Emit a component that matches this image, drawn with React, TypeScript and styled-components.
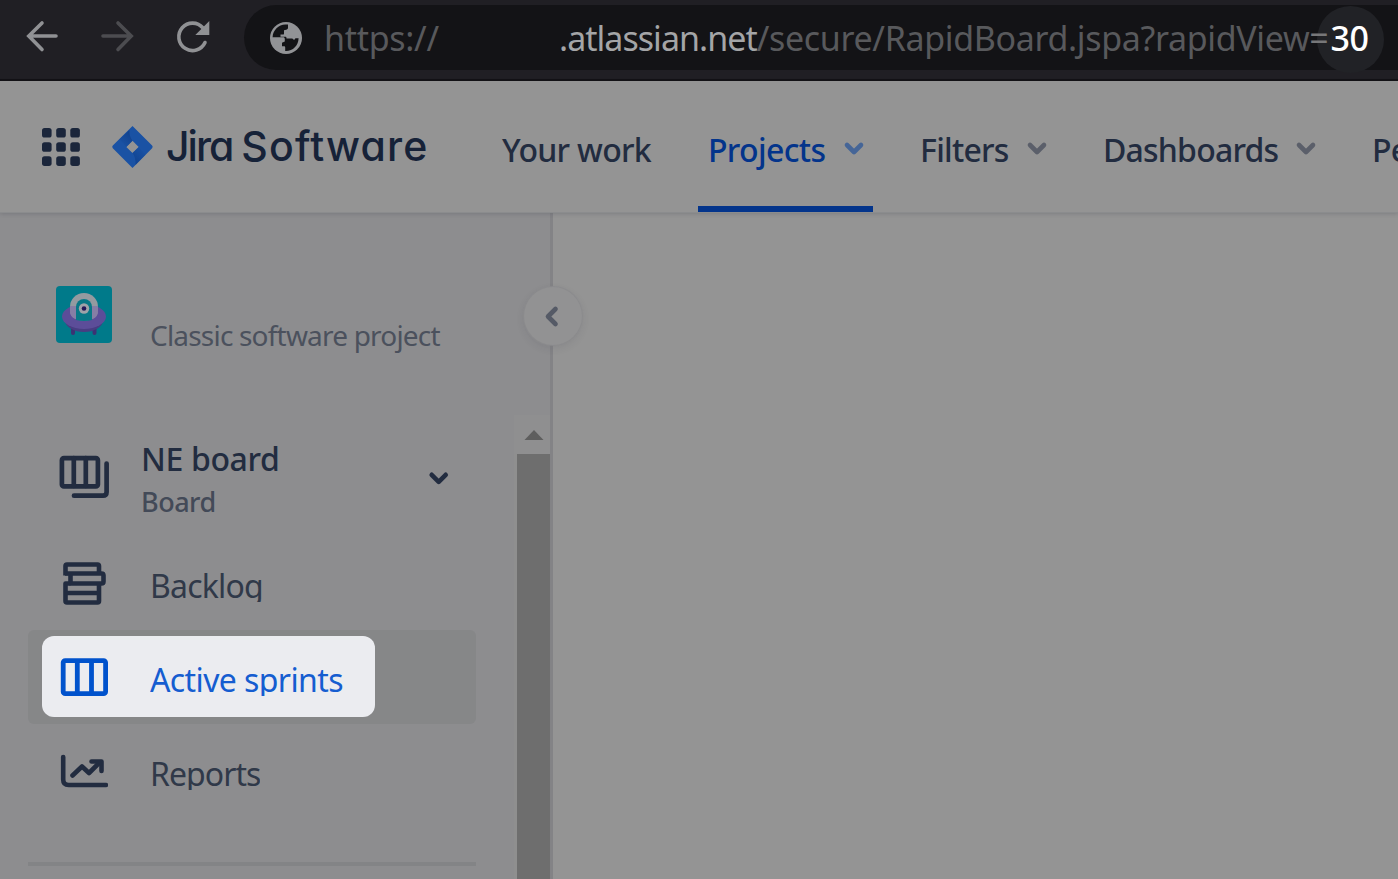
import React from 'react';
import styled, { createGlobalStyle } from 'styled-components';

const ink = '#222c40';

const GlobalStyle = createGlobalStyle`
  * { box-sizing: border-box; }
  body {
    margin: 0;
    width: 1398px;
    height: 879px;
    overflow: hidden;
    background: #949494;
    font-family: 'Noto Sans', 'Open Sans', sans-serif;
  }
  svg { display: block; flex: none; }
`;

const Window = styled.div`
  display: flex;
  flex-direction: column;
  width: 1398px;
  height: 879px;
  overflow: hidden;
`;

const BrowserBar = styled.header`
  display: flex;
  align-items: flex-start;
  height: 81px;
  flex: none;
  background: #201f24;
  border-bottom: 2px solid #121115;
`;

const BrowserButtons = styled.div`
  display: flex;
  width: 244px;
  flex: none;
`;

const AddressBar = styled.div`
  display: flex;
  flex: none;
  align-items: center;
  width: 1200px;
  height: 65px;
  margin-top: 5px;
  padding-left: 26px;
  border-radius: 33px;
  background: #131316;
`;

const UrlPart = styled.span<{ $color: string; $spacing?: number; $width?: number; $weight?: number }>`
  position: relative;
  flex: none;
  width: ${(p) => (p.$width ? `${p.$width}px` : 'auto')};
  font-size: 34px;
  font-weight: ${(p) => p.$weight ?? 400};
  line-height: 66px;
  white-space: pre;
  color: ${(p) => p.$color};
  letter-spacing: ${(p) => p.$spacing ?? 0}px;
`;

const Halo = styled.span`
  position: absolute;
  left: -14px;
  top: 1px;
  width: 67px;
  height: 67px;
  border-radius: 50%;
  background: #212226;
`;

const Above = styled.span`
  position: relative;
  z-index: 1;
`;

const TopNav = styled.nav`
  position: relative;
  z-index: 1;
  display: flex;
  height: 132px;
  flex: none;
  background: #949494;
  border-bottom: 1px solid #8b8c8e;
  box-shadow: 0 1px 4px rgba(50, 55, 70, 0.22);
`;

const Brand = styled.div`
  display: flex;
  width: 492px;
  flex: none;
  padding-left: 40px;
`;

const BrandName = styled.span`
  margin-left: 12px;
  font-family: Inter, sans-serif;
  font-feature-settings: 'cv11' 1;
  font-weight: 470;
  font-size: 41px;
  line-height: 131px;
  letter-spacing: 1.2px;
  color: #162238;
  white-space: nowrap;
`;

const BrandLead = styled.span`
  letter-spacing: -2px;
`;

const NavItem = styled.div<{ $width: number; $active?: boolean }>`
  display: flex;
  flex: none;
  justify-content: space-between;
  width: ${(p) => p.$width}px;
  height: 131px;
  padding: 0 7px 0 10px;
  margin-right: 37px;
  color: ${(p) => (p.$active ? '#03348b' : ink)};
  border-bottom: 6px solid ${(p) => (p.$active ? '#03348b' : 'transparent')};
`;

const NavLabel = styled.span<{ $spacing: number }>`
  font-size: 32px;
  font-weight: 500;
  line-height: 137px;
  white-space: nowrap;
  letter-spacing: ${(p) => p.$spacing}px;
`;

const Body = styled.div`
  display: flex;
  flex: 1;
  min-height: 0;
`;

const Sidebar = styled.aside`
  position: relative;
  display: flex;
  flex-direction: column;
  width: 553px;
  flex: none;
  background: #8d8d8f;
  border-right: 3px solid #838386;
`;

const Content = styled.main`
  flex: 1;
  background: #949494;
`;

const ProjectHeader = styled.div`
  display: flex;
  height: 202px;
  flex: none;
  padding: 73px 0 0 56px;
`;

const ProjectType = styled.span`
  margin: 29px 0 0 38px;
  font-size: 28px;
  line-height: 40px;
  letter-spacing: -0.8px;
  color: #4b515d;
  white-space: nowrap;
`;

const CollapseButton = styled.button`
  position: absolute;
  left: 524px;
  top: 74px;
  width: 58px;
  height: 58px;
  padding: 0;
  border: 0;
  border-radius: 50%;
  background: #929293;
  box-shadow: 0 0 1px 1px #8b8b8d, 0 3px 8px rgba(40, 44, 56, 0.1);
`;

const ScrollArea = styled.div`
  display: flex;
  flex: 1;
  min-height: 0;
`;

const Menu = styled.div`
  width: 514px;
  flex: none;
  padding: 0 38px 0 28px;
`;

const BoardRow = styled.div`
  display: flex;
  height: 121px;
`;

const BoardText = styled.div`
  display: flex;
  flex-direction: column;
  width: 287px;
  padding-top: 22px;
  flex: none;
`;

const BoardName = styled.span`
  font-size: 32px;
  font-weight: 500;
  line-height: 44px;
  letter-spacing: -0.35px;
  color: ${ink};
`;

const BoardKind = styled.span`
  font-size: 27px;
  font-weight: 500;
  line-height: 41px;
  letter-spacing: -0.5px;
  color: #434a58;
`;

const MenuRow = styled.div<{ $selected?: boolean }>`
  height: 94px;
  padding: 6px 0 0 14px;
  border-radius: 6px;
  background: ${(p) => (p.$selected ? '#868788' : 'transparent')};
`;

const MenuInner = styled.div<{ $lit?: boolean }>`
  display: flex;
  align-items: flex-start;
  width: 333px;
  height: 81px;
  padding-left: 18px;
  border-radius: 12px;
  color: ${(p) => (p.$lit ? '#155dd0' : '#303949')};
  background: ${(p) => (p.$lit ? '#ebecf0' : 'transparent')};
`;

const MenuLabel = styled.span<{ $spacing: number }>`
  height: 60px;
  margin-left: 42px;
  overflow: hidden;
  font-size: 32px;
  line-height: 87px;
  white-space: nowrap;
  letter-spacing: ${(p) => p.$spacing}px;
`;

const Divider = styled.hr`
  height: 4px;
  margin: 44px 0 0;
  border: 0;
  background: #838486;
`;

const ScrollTrack = styled.div`
  display: flex;
  flex-direction: column;
  align-items: flex-end;
  width: 36px;
  background: #8f8f8f;
`;

const ScrollUp = styled.div`
  display: flex;
  justify-content: center;
  width: 36px;
  height: 39px;
  padding: 15px 0 0 3px;
  background: #8f8f90;
`;

const Thumb = styled.div`
  flex: 1;
  width: 33px;
  background: #6e6e6e;
`;

const Chevron = ({ color }: { color: string }) => (
  <svg width="24" height="131" viewBox="0 0 24 131" fill="none" stroke={color} strokeWidth="4.6" strokeLinecap="round" strokeLinejoin="round">
    <path d="M5 64l7 7 7-7" />
  </svg>
);

const BrowserIcons = () => (
  <svg width="244" height="79" viewBox="0 0 244 79" fill="none" strokeWidth="3.6" strokeLinecap="round">
    <path d="M56 36H29M42 23L28.8 36 42 49.5" stroke="#909194" />
    <path d="M103 36h27M118 23l13.200 13L118 49.500" stroke="#4c4c50" />
    <path d="M205 42.500a13.700 13.700 0 1 1-2-14.500" stroke="#909194" />
    <path d="M209.300 21v14h-14z" fill="#909194" />
  </svg>
);

const GlobeIcon = styled.svg`
  margin-right: 22px;
`;

const Globe = () => (
  <GlobeIcon width="32" height="32" viewBox="270 22 32 32">
    <circle cx="286" cy="38" r="16" fill="#929396" />
    <path
      fill="#131316"
      d="M272.600 37.200C272.900 30.300 278.500 24.800 285.400 24.600h2.600v3.200c0 1.300-.6 1.700-1.900 1.900l-2.100.5v3.200c0 .8-.5 1.200-1.200 1.200h-2.300v2.200h4.500c1 0 1.500.5 1.500 1.400v.4h5.800l1.800 1.400 1.400-1.800h3.100c-.1 7.200-5.600 12.800-12.700 12.800h-.7v-3.600c0-.9-.4-1.200-1.200-1.200h-2v-3.400l2.800-1.400v-2.400c0-1.200-.6-1.800-1.800-1.800z"
    />
  </GlobeIcon>
);

const BrandIcons = () => (
  <svg width="114" height="131" viewBox="40 81 114 131">
    <defs>
      <linearGradient id="fold" x1="132" y1="132" x2="120" y2="144" gradientUnits="userSpaceOnUse">
        <stop offset="0" stopColor="#0c3880" />
        <stop offset="1" stopColor="#1a52a4" />
      </linearGradient>
      <linearGradient id="foldLow" x1="133" y1="162" x2="145" y2="150" gradientUnits="userSpaceOnUse">
        <stop offset="0" stopColor="#0c3c88" />
        <stop offset="1" stopColor="#1a52a4" />
      </linearGradient>
    </defs>
    {[128, 142.200, 156.300].map((y) =>
      [42, 56.200, 70.300].map((x) => <rect key={`${x}-${y}`} x={x} y={y} width="9.600" height="9.600" rx="2.600" fill="#1b263b" />),
    )}
    <path fillRule="evenodd" fill="#1a52a4" d="M132.500 126l19.600 19.600q1.200 1.300 0 2.600L132.500 168l-19.700-19.800q-1.200-1.300 0-2.600zM132.500 140.700l-6.200 6.200 6.200 6.200 6.200-6.200z" />
    <path fill="url(#fold)" d="M129.500 130q-.5 6 3 10.700l-6.200 6.200-6.800-7.600z" opacity="0.7" />
    <path fill="url(#foldLow)" d="M135.500 165q.5-7-3-11.900l6.200-6.200 6.800 7.800z" opacity="0.7" />
  </svg>
);

const Avatar = () => (
  <svg width="56" height="57" viewBox="0 0 56 57">
    <rect width="56" height="57" rx="4" fill="#007a8a" />
    <path d="M17 43v4M38.500 43v4" stroke="#3c3274" strokeWidth="4" strokeLinecap="round" />
    <ellipse cx="28" cy="34" rx="19" ry="12" fill="#483d82" />
    <ellipse cx="28" cy="30.500" rx="22" ry="12.500" fill="#5c4d99" />
    <path d="M14 21a14 14 0 0 1 28 0v4c0 6-5 9.500-14 9.500S14 31 14 25z" fill="#949aa0" />
    <path d="M14 20v5c0 6 5 9.500 14 9.500S42 31 42 25v-5z" fill="#8072a6" opacity=".7" />
    <path d="M20 34V21a8 8 0 0 1 16 0v13q-8 2-16 0z" fill="#087887" />
    <circle cx="28" cy="22.500" r="5.200" fill="#a0a2a8" />
    <circle cx="28" cy="22.500" r="2.300" fill="#251758" />
  </svg>
);

const BoardsIcon = () => (
  <svg width="113" height="121" viewBox="28 415 113 121" fill="none" stroke={ink} strokeWidth="4.700" strokeLinejoin="round" strokeLinecap="round">
    <rect x="61.900" y="458.200" width="36" height="28.200" rx="2" />
    <path d="M73.800 458v28M85.800 458v28" />
    <path d="M106.600 463.500V492q0 3.700-3.700 3.700H74" />
  </svg>
);

const BacklogIcon = () => (
  <svg width="48" height="81" viewBox="60 542 48 81" fill="none" stroke={ink} strokeWidth="4.600" strokeLinejoin="round">
    <path d="M65.500 575.500V566q0-1.500 1.500-1.500h30.500q1.500 0 1.500 1.500v7.500" />
    <path d="M65 573.500h36.500q2 0 2 2v6q0 2-2 2H70.500v-9" />
    <path d="M70.500 583.500H65.500V601q0 1.500 1.500 1.500h30.500q1.500 0 1.500-1.500V583.500M65.500 593h33.500" />
  </svg>
);

const SprintsIcon = () => (
  <svg width="48" height="81" viewBox="60 636 48 81" fill="none" stroke="#0052cc" strokeWidth="4.800">
    <rect x="63.200" y="660.600" width="42.400" height="33.100" rx="2" />
    <path d="M77.300 660v34M91.500 660v34" />
  </svg>
);

const ReportsIcon = () => (
  <svg width="48" height="81" viewBox="60 730 48 81" fill="none" stroke={ink} strokeWidth="4.600" strokeLinejoin="round" strokeLinecap="round">
    <path d="M63.200 757v22.500q0 5.500 5.500 5.500H106" />
    <path d="M72.500 775.500L82 766.500l7 6.500 10.500-10.500" />
    <path d="M91.500 761.500h10v9.500" />
  </svg>
);

export default function App() {
  return (
    <Window>
      <GlobalStyle />
      <BrowserBar>
        <BrowserButtons><BrowserIcons /></BrowserButtons>
        <AddressBar>
          <Globe />
          <UrlPart $color="#58595c" $width={235} $spacing={-0.3}>https://</UrlPart>
          <UrlPart $color="#a4a5a7" $spacing={-0.97}>.atlassian.net</UrlPart>
          <UrlPart $color="#58595c" $spacing={-0.34}>/secure/RapidBoard.jspa?rapidView</UrlPart>
          <UrlPart $color="#777779" $spacing={1.800}><Above>=</Above></UrlPart>
          <UrlPart $color="#ffffff" $spacing={-0.5} $weight={500}><Halo /><Above>30</Above></UrlPart>
        </AddressBar>
      </BrowserBar>
      <TopNav>
        <Brand>
          <BrandIcons />
          <BrandName><BrandLead>Jira </BrandLead>Software</BrandName>
        </Brand>
        <NavItem $width={169}><NavLabel $spacing={-0.7}>Your work</NavLabel></NavItem>
        <NavItem $width={175} $active>
          <NavLabel $spacing={-0.65}>Projects</NavLabel>
          <Chevron color="#456597" />
        </NavItem>
        <NavItem $width={146}>
          <NavLabel $spacing={-0.75}>Filters</NavLabel>
          <Chevron color="#5b5f6a" />
        </NavItem>
        <NavItem $width={232}>
          <NavLabel $spacing={-0.8}>Dashboards</NavLabel>
          <Chevron color="#5b5f6a" />
        </NavItem>
        <NavItem $width={146}><NavLabel $spacing={-0.7}>People</NavLabel></NavItem>
      </TopNav>
      <Body>
        <Sidebar>
          <ProjectHeader>
            <Avatar />
            <ProjectType>Classic software project</ProjectType>
          </ProjectHeader>
          <ScrollArea>
            <Menu>
              <BoardRow>
                <BoardsIcon />
                <BoardText>
                  <BoardName>NE board</BoardName>
                  <BoardKind>Board</BoardKind>
                </BoardText>
                <svg width="22" height="121" viewBox="428 415 22 121" fill="none" stroke={ink} strokeWidth="4.600" strokeLinecap="round" strokeLinejoin="round">
                  <path d="M431.700 474.800l7 7 7-7" />
                </svg>
              </BoardRow>
              <MenuRow>
                <MenuInner><BacklogIcon /><MenuLabel $spacing={-0.8}>Backlog</MenuLabel></MenuInner>
              </MenuRow>
              <MenuRow $selected>
                <MenuInner $lit><SprintsIcon /><MenuLabel $spacing={-0.6}>Active sprints</MenuLabel></MenuInner>
              </MenuRow>
              <MenuRow>
                <MenuInner><ReportsIcon /><MenuLabel $spacing={-0.95}>Reports</MenuLabel></MenuInner>
              </MenuRow>
              <Divider />
            </Menu>
            <ScrollTrack>
              <ScrollUp>
                <svg width="20" height="10" viewBox="0 0 20 10"><path d="M10 0l9.500 10H.5z" fill="#5e5e5e" /></svg>
              </ScrollUp>
              <Thumb />
            </ScrollTrack>
          </ScrollArea>
          <CollapseButton aria-label="Collapse sidebar">
            <svg width="58" height="58" viewBox="0 0 58 58" fill="none" stroke="#555a66" strokeWidth="4.600" strokeLinecap="round" strokeLinejoin="round">
              <path d="M31.500 22l-7.500 7.500 7.500 7.500" />
            </svg>
          </CollapseButton>
        </Sidebar>
        <Content />
      </Body>
    </Window>
  );
}
